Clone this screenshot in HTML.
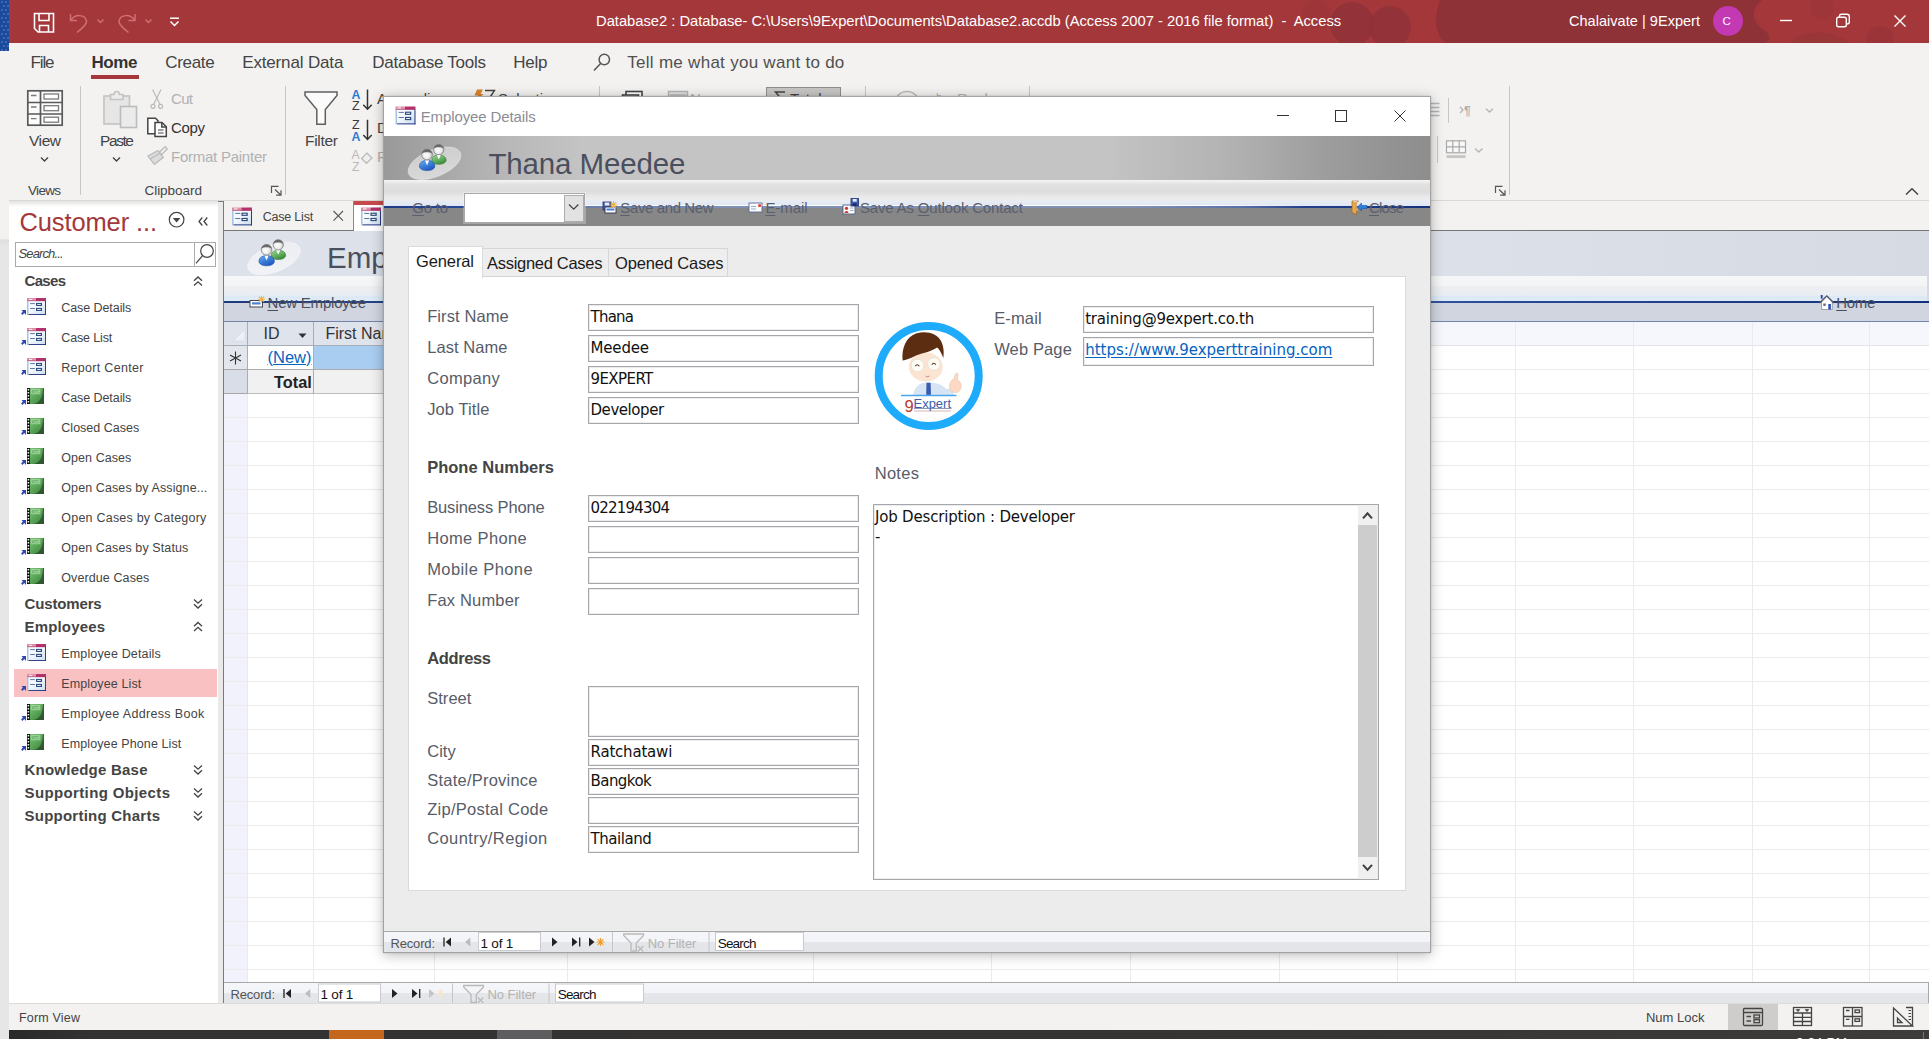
<!DOCTYPE html>
<html><head><meta charset="utf-8"><title>Database2 - Access</title>
<style>
*{box-sizing:border-box;margin:0;padding:0}
html,body{width:1929px;height:1039px;overflow:hidden;background:#f3f2f1;font-family:"Liberation Sans",sans-serif;color:#444}
.a{position:absolute}
.t{position:absolute;white-space:nowrap;line-height:1}
svg.L{position:absolute;left:0;top:0;width:1929px;height:1039px;overflow:hidden}
.fld{position:absolute;background:#fff;border:1px solid #a6a6ad;box-shadow:inset 0 0 0 1px #ececec}
u{text-decoration:underline;text-underline-offset:2px}
</style></head><body>
<div class="a" style="left:0;top:0;width:9px;height:1039px;background:#e6e6e6"></div>
<div class="a" style="left:0;top:43px;width:9px;height:204px;background:linear-gradient(#f3f2f1 0,#f3f2f1 96%,#dedede 96.5%,#e6e6e6 100%)"></div>
<div class="a" style="left:0;top:0;width:9px;height:51px;background:#1a4a9c"></div>
<div class="a" id="titlebar" style="left:9px;top:0;width:1920px;height:43px;background:#a4373a"></div>
<div class="a" id="ribbon" style="left:9px;top:43px;width:1920px;height:158px;background:#f3f2f1"></div>
<div class="a" style="left:9px;top:200px;width:1920px;height:4px;background:linear-gradient(#d2d0ce,#e9e8e7 40%,#f3f2f1)"></div>
<div class="a" id="nav" style="left:9px;top:203px;width:209px;height:800px;background:#fff"></div>
<div class="a" style="left:9px;top:201px;width:209px;height:6px;background:linear-gradient(#e4e3e2,#fff)"></div>
<div class="a" style="left:218px;top:201px;width:6px;height:802px;background:#e9e9e9;border-right:1px solid #7a7a7a;border-top:1px solid #7a7a7a"></div>
<div class="a" id="doc" style="left:224px;top:201px;width:1705px;height:782px;background:#fff"></div>
<div class="a" style="left:224px;top:201px;width:1705px;height:30px;background:#f3f2f1"></div>
<div class="a" style="left:224px;top:201px;width:130px;height:30px;background:#f3f2f1;border-right:1px solid #8a8a8a;border-bottom:1px solid #777"></div>
<div class="a" style="left:224px;top:230px;width:1705px;height:1px;background:#777"></div>
<div class="a" style="left:354px;top:201px;width:130px;height:31px;background:#fff;border-top:4px solid #c8494d"></div>
<div class="a" style="left:224px;top:231px;width:1705px;height:45px;background:linear-gradient(90deg,#dde1e9 0,#dfe3ea 60%,#d6dae3 100%)"></div>
<div class="a" style="left:1927px;top:276px;width:2px;height:25px;background:#d6dae3"></div>
<div class="a" style="left:224px;top:276px;width:1703px;height:25px;background:linear-gradient(#f6f7f8 0,#f3f4f5 38%,#eceef1 42%,#eaedf2 75%,#ddeaf6 82%,#dcebf7 100%)"></div>
<div class="a" style="left:224px;top:301px;width:1705px;height:2px;background:linear-gradient(90deg,#1f3a7c 0,#2b4a96 20%,#5b7fc4 50%,#2b4a96 75%,#14307a 100%)"></div>
<div class="a" style="left:224px;top:303px;width:1705px;height:18px;background:#d0d5df"></div>
<div class="a" style="left:224px;top:321px;width:1705px;height:1px;background:#7484ab"></div>
<div class="a" style="left:224px;top:322px;width:1705px;height:24px;background:#f6f7fd"></div>
<div class="a" style="left:224px;top:322px;width:161px;height:24px;background:#dfe3ec;border-bottom:1px solid #a9adb8"></div>
<div class="a" style="left:224px;top:346px;width:23px;height:637px;background:#f1f2fb"></div>
<div class="a" style="left:224px;top:346px;width:23px;height:24px;background:#e4e6ed;border-bottom:1px solid #a8a8a8"></div>
<div class="a" style="left:224px;top:370px;width:23px;height:24px;background:#d9dde7;border-bottom:1px solid #a8a8a8"></div>
<div class="a" style="left:248px;top:370px;width:1150px;height:24px;background:#f1f1f1"></div>
<div class="a" style="left:314px;top:346px;width:80px;height:23px;background:#a9cdf1"></div>
<div class="a" style="left:224px;top:982px;width:1705px;height:21px;border-top:1px solid #a9a9a9;border-right:1px solid #a9a9a9;background:linear-gradient(#f5f6f9 0,#f3f4f7 48%,#e4e6ea 52%,#e3e5e9 100%)"></div>
<div class="a" style="left:9px;top:1003px;width:1920px;height:27px;background:#f3f2f1;border-top:1px solid #dcdcdc"></div>
<div class="a" style="left:1728px;top:1004px;width:50px;height:26px;background:#cfcdcb"></div>
<div class="a" style="left:9px;top:1030px;width:1920px;height:9px;background:linear-gradient(90deg,#2a2929 0,#333232 4%,#353433 60%,#3e3c3b 100%)"></div>
<div class="a" style="left:1923px;top:1032px;width:1px;height:7px;background:#77726f"></div>
<div class="a" style="left:329px;top:1030px;width:55px;height:9px;background:#c2671d"></div>
<div class="a" style="left:497px;top:1030px;width:55px;height:9px;background:#5d5d5f"></div>
<svg class="L" viewBox="0 0 1929 1039">
<defs><radialGradient id="gHead" cx=".42" cy=".55" r=".6"><stop offset="0" stop-color="#fff"/><stop offset=".55" stop-color="#ececec"/><stop offset="1" stop-color="#b4b4b4"/></radialGradient><linearGradient id="gBlue" x1="0" y1="0" x2=".6" y2="1"><stop offset="0" stop-color="#6fb1f2"/><stop offset=".5" stop-color="#3f83dc"/><stop offset="1" stop-color="#1f58bf"/></linearGradient><linearGradient id="gGreen" x1="0" y1="0" x2=".6" y2="1"><stop offset="0" stop-color="#a6dba0"/><stop offset=".5" stop-color="#6bb566"/><stop offset="1" stop-color="#3c8a3a"/></linearGradient><linearGradient id="gForm" x1="0" y1="0" x2="1" y2="1"><stop offset="0" stop-color="#fff"/><stop offset=".45" stop-color="#f5f9fd"/><stop offset="1" stop-color="#c9dcef"/></linearGradient><linearGradient id="gRep" x1="0" y1="0" x2="1" y2="1"><stop offset="0" stop-color="#86c883"/><stop offset=".5" stop-color="#5ba858"/><stop offset="1" stop-color="#3c7f3b"/></linearGradient><linearGradient id="gPlate" x1="0" y1="1" x2="1" y2="0"><stop offset="0" stop-color="rgba(255,255,255,.62)"/><stop offset="1" stop-color="rgba(255,255,255,.4)"/></linearGradient></defs>
<g fill="#5f82c4" opacity=".55"><rect x="1" y="1" width="2" height="2"/><rect x="5" y="1" width="2" height="2"/><rect x="3" y="5" width="2" height="2"/><rect x="7" y="5" width="2" height="2"/><rect x="1" y="9" width="2" height="2"/><rect x="5" y="9" width="2" height="2"/><rect x="3" y="13" width="2" height="2"/><rect x="7" y="13" width="2" height="2"/><rect x="1" y="17" width="2" height="2"/><rect x="5" y="17" width="2" height="2"/><rect x="3" y="21" width="2" height="2"/><rect x="7" y="21" width="2" height="2"/><rect x="1" y="25" width="2" height="2"/><rect x="5" y="25" width="2" height="2"/><rect x="3" y="29" width="2" height="2"/><rect x="7" y="29" width="2" height="2"/><rect x="1" y="33" width="2" height="2"/><rect x="5" y="33" width="2" height="2"/><rect x="3" y="37" width="2" height="2"/><rect x="7" y="37" width="2" height="2"/><rect x="1" y="41" width="2" height="2"/><rect x="5" y="41" width="2" height="2"/><rect x="3" y="45" width="2" height="2"/><rect x="7" y="45" width="2" height="2"/><rect x="1" y="49" width="2" height="2"/><rect x="5" y="49" width="2" height="2"/></g>
<clipPath id="tbc"><rect x="9" y="0" width="1920" height="43"/></clipPath><g fill="#8d3238" clip-path="url(#tbc)"><path d="M1440 0 H1762 C1750 10 1752 22 1764 30 C1772 36 1770 41 1765 43 H1445 C1432 30 1436 12 1440 0Z" opacity=".92"/><circle cx="1352" cy="24" r="22" opacity=".75"/><circle cx="1390" cy="27" r="21" opacity=".75"/><circle cx="1316" cy="14" r="14" opacity=".25"/><path d="M1790 43 C1800 30 1830 28 1850 43Z" opacity=".45"/><circle cx="1880" cy="40" r="14" opacity=".35"/><circle cx="1822" cy="8" r="12" opacity=".25"/></g>
<g stroke="#fff" fill="none" stroke-width="1.6"><path d="M34.5 13.5 H53.5 V32 H38 L34.5 28.5 Z"/><path d="M39 14 V20.5 H49 V14"/><path d="M39.5 32 V25.5 H48.5 V32"/></g>
<g stroke="#cf6f74" fill="none" stroke-width="1.5"><path d="M70.5 14 V20.5 H77"/><path d="M71 20 C75 14 85 14 86.5 21 C87 25 82 28 77 32.5"/><path d="M97.5 19.5 L100.5 22.5 L103.5 19.5"/><path d="M135 14 V20.5 H128.5"/><path d="M134.5 20 C130.5 14 120.5 14 119 21 C118.5 25 123.5 28 128.5 32.5"/><path d="M145.5 19.5 L148.5 22.5 L151.5 19.5"/></g>
<g stroke="#fff" fill="none" stroke-width="1.5"><path d="M170 18.2 H179"/><path d="M170.5 21.5 L174.5 25.5 L178.5 21.5"/></g>
<circle cx="1728" cy="21" r="15" fill="#c239b3"/>
<g stroke="#fff" fill="none" stroke-width="1.4"><path d="M1780 20.5 H1792"/><rect x="1836.7" y="17.2" width="9.6" height="9.6" rx="1.8"/><path d="M1839.5 17 V16 Q1839.5 14.3 1841.3 14.3 H1847 Q1849.3 14.3 1849.3 16.5 V22.3 Q1849.3 24 1847 24"/><path d="M1894.5 15.5 L1905.5 26.5 M1905.5 15.5 L1894.5 26.5"/></g>
<rect x="91" y="75" width="48" height="4" fill="#a4373a"/>
<g stroke="#555" fill="none" stroke-width="1.5"><circle cx="604.3" cy="59.5" r="5.2"/><path d="M600.6 63.4 L594 70.5"/></g>
<path d="M80.5 86 V195" stroke="#c8c6c4" stroke-width="1"/>
<path d="M285.5 86 V195" stroke="#c8c6c4" stroke-width="1"/>
<path d="M599.5 86 V195" stroke="#c8c6c4" stroke-width="1"/>
<path d="M865.5 86 V195" stroke="#c8c6c4" stroke-width="1"/>
<path d="M1029.5 86 V195" stroke="#c8c6c4" stroke-width="1"/>
<path d="M1509.5 86 V195" stroke="#c8c6c4" stroke-width="1"/>
<path d="M1448.5 98 V123" stroke="#c8c6c4" stroke-width="1"/>
<path d="M1437.5 136 V163" stroke="#c8c6c4" stroke-width="1"/>
<g stroke="#5a5a5a" fill="#fbfbfb" stroke-width="1.7"><rect x="27.8" y="90.8" width="34.4" height="34.4"/><path d="M40.5 91 V125 M28 102.5 H62 M28 114 H62" fill="none"/></g>
<g stroke="#7a7a7a" fill="#fff" stroke-width="1.3"><path d="M31 95.5 H36.5 M31 107 H36.5 M31 118.7 H36.5"/><rect x="44" y="94" width="14.5" height="5"/><rect x="44" y="105.7" width="14.5" height="5"/><rect x="44" y="117.2" width="14.5" height="5"/></g>
<g stroke="#444" fill="none" stroke-width="1.4"><path d="M41 157.5 L44.5 161 L48 157.5"/><path d="M113 157.5 L116.5 161 L120 157.5"/></g>
<g stroke="#c3c3c3" stroke-width="1.6"><rect x="104" y="96" width="25.5" height="28" fill="#e6e6e6"/><path d="M110.5 99.5 V94.5 H114 C114 90.5 119.5 90.5 119.5 94.5 H123 V99.5 Z" fill="#ececec"/><rect x="120.5" y="106.5" width="16" height="21" fill="#ebebeb" stroke="#bcbcbc"/></g>
<g stroke="#b9b9b9" fill="none" stroke-width="1.2"><path d="M152.6 89.5 L160 104.5 M161 89.5 L153.6 104.5"/><circle cx="153" cy="106.3" r="2"/><circle cx="160.6" cy="106.3" r="2"/></g>
<g stroke="#444" fill="#fdfdfd" stroke-width="1.5"><path d="M147.8 118.3 H155.5 L158 120.8 V133.7 H147.8 Z"/><path d="M155 122.5 H162 L166.3 126.8 V136.5 H155 Z"/><path d="M161.8 122.7 V127 H166" fill="none"/><path d="M158 130 H163.5 M158 133 H163.5" stroke-width="1.1"/></g>
<g stroke="#b9b9b9" fill="#dcdcdc" stroke-width="1.2"><path d="M147.8 156 L158 150.5 L163.3 157.3 L154.5 164.4 Z"/><path d="M150.5 158.7 L160 153.2" fill="none"/><path d="M159.5 152 L165.2 146.6 L167.3 149 L161.6 154.7 Z" fill="#eee"/></g>
<g stroke="#555" fill="none" stroke-width="1.2"><path d="M271.5 193 V186.3 H278.5"/><path d="M275.0 189.5 L280.8 195 M281.0 190.3 V195.2 H276.1"/></g>
<g stroke="#555" fill="none" stroke-width="1.2"><path d="M1495.5 193 V186.3 H1502.5"/><path d="M1499.0 189.5 L1504.8 195 M1505.0 190.3 V195.2 H1500.1"/></g>
<path d="M305 92 H337 V95.5 L325.3 109.5 V124.3 H316.8 V109.5 L305 95.5 Z" stroke="#606060" fill="#fbfbfb" stroke-width="1.5"/>
<g stroke="#333" fill="none" stroke-width="1.5"><path d="M367.5 89.5 V109 M363.3 104.8 L367.5 109.2 L371.7 104.8"/><path d="M367.5 119.8 V139.3 M363.3 135.1 L367.5 139.5 L371.7 135.1"/></g>
<path d="M366.8 153 L372 158 L366.5 163.3 L361.5 158.5 Z" stroke="#b9b9b9" fill="#eee" stroke-width="1.2"/>
<path d="M477 89.5 H483 L480.5 94 H483.5 L476 101.5 L478 95.5 H474.5 Z" fill="#d9822b"/>
<path d="M485 90.5 H494.5 L490.5 96.5 V102 H488.5 V96.5" stroke="#444" fill="none" stroke-width="1.4"/>
<g stroke="#444" fill="#fdfdfd" stroke-width="1.6"><rect x="626" y="91.5" width="16" height="13"/><rect x="622.5" y="95" width="16" height="13"/></g>
<g stroke="#b5b5b5" fill="#dedede" stroke-width="1.4"><rect x="668.5" y="91.5" width="19" height="13"/><path d="M670 95 H686"/></g>
<rect x="766.5" y="87.5" width="74" height="24" fill="#c8c6c4" stroke="#8f8d8b"/>
<path d="M785 92 H775.5 L781 98.5 L775.5 105 H785" stroke="#444" fill="none" stroke-width="1.5"/>
<g stroke="#b9b9b9" fill="none" stroke-width="1.5"><circle cx="907" cy="104" r="12.5"/><path d="M932 96 L929 98.5 L932 101"/></g>
<g stroke="#b4b4b4" fill="none" stroke-width="1.3"><path d="M1428 103.5 H1439.5 M1428 107.5 H1439.5 M1428 111.5 H1439.5 M1428 115.5 H1439.5"/><path d="M1486 108.7 L1489.5 112 L1493 108.7"/><path d="M1475 148.5 L1478.7 152 L1482.5 148.5"/><path d="M1460 107 L1463 110 L1460 113"/></g>
<g stroke="#a9a9a9" fill="#f7f7f7" stroke-width="1.2"><rect x="1446.5" y="140.8" width="19" height="12"/><path d="M1446.5 146.8 H1465.5 M1452.8 140.8 V152.8 M1459.2 140.8 V152.8" fill="none"/><rect x="1446.5" y="155.2" width="19" height="2.8" fill="#c5c5c5" stroke="none"/></g>
<path d="M1906 194.5 L1912 188.8 L1918 194.5" stroke="#444" fill="none" stroke-width="1.5"/>
<g stroke="#444" fill="none" stroke-width="1.2"><circle cx="176.6" cy="219.7" r="7.3"/></g><path d="M172.8 218 H180.4 L176.6 222.5 Z" fill="#444"/>
<g stroke="#444" fill="none" stroke-width="1.3"><path d="M202.3 217.5 L199 221.5 L202.3 225.5 M207.3 217.5 L204 221.5 L207.3 225.5"/></g>
<rect x="15.5" y="242.5" width="200" height="24" fill="#fff" stroke="#ababab"/><path d="M194.5 243 V266" stroke="#ababab"/>
<g stroke="#444" fill="none" stroke-width="1.2"><circle cx="207" cy="251" r="6.3"/><path d="M202.6 255.6 L196 263.3"/></g>
<path d="M194 280.7 L198 277.0 L202 280.7 M194 285.5 L198 281.8 L202 285.5" stroke="#444" fill="none" stroke-width="1.3"/>
<path d="M194 599.5 L198 603.2 L202 599.5 M194 604.3 L198 608 L202 604.3" stroke="#444" fill="none" stroke-width="1.3"/>
<path d="M194 626.2 L198 622.5 L202 626.2 M194 631 L198 627.3 L202 631" stroke="#444" fill="none" stroke-width="1.3"/>
<path d="M194 765.5 L198 769.2 L202 765.5 M194 770.3 L198 774 L202 770.3" stroke="#444" fill="none" stroke-width="1.3"/>
<path d="M194 788.5 L198 792.2 L202 788.5 M194 793.3 L198 797 L202 793.3" stroke="#444" fill="none" stroke-width="1.3"/>
<path d="M194 811.5 L198 815.2 L202 811.5 M194 816.3 L198 820 L202 816.3" stroke="#444" fill="none" stroke-width="1.3"/>
<rect x="14" y="669" width="203" height="28" fill="#f9c1c1"/>
<g transform="translate(27 298) scale(1.0)"><rect x="0" y="0" width="19" height="17" fill="url(#gForm)"/><rect x="0" y="0" width="9" height="3" fill="#dc8fa6"/><rect x="9" y="0" width="10" height="3" fill="#b3326c"/><path d="M0 2.8 H19" stroke="#a82c62" stroke-width=".5"/><rect x="2" y=".9" width="3.2" height=".9" fill="#fff"/><rect x="0" y="3" width="1.5" height="14" fill="#a9c3e6"/><rect x="18.1" y="3" width=".9" height="14" fill="#1e2f7c"/><rect x="1.5" y="16.1" width="17.5" height=".9" fill="#1e2f7c"/><path d="M3.1 5.6 H7.9 M3.1 10.5 H7.9" stroke="#4a6a9a" stroke-width=".9"/><rect x="9" y="4.9" width="6" height="3.1" fill="#2f4d80"/><rect x="9" y="9.9" width="6" height="3.1" fill="#2f4d80"/><path d="M10.2 6.45 H13.8 M10.2 11.45 H13.8" stroke="#fff" stroke-width=".9"/></g>
<path d="M26.0 315 V310 H21.5 L22.9 311.6 L21.1 313.6 L22.4 314.9 L24.3 313 Z" fill="#2f47b0"/>
<g transform="translate(27 328) scale(1.0)"><rect x="0" y="0" width="19" height="17" fill="url(#gForm)"/><rect x="0" y="0" width="9" height="3" fill="#dc8fa6"/><rect x="9" y="0" width="10" height="3" fill="#b3326c"/><path d="M0 2.8 H19" stroke="#a82c62" stroke-width=".5"/><rect x="2" y=".9" width="3.2" height=".9" fill="#fff"/><rect x="0" y="3" width="1.5" height="14" fill="#a9c3e6"/><rect x="18.1" y="3" width=".9" height="14" fill="#1e2f7c"/><rect x="1.5" y="16.1" width="17.5" height=".9" fill="#1e2f7c"/><path d="M3.1 5.6 H7.9 M3.1 10.5 H7.9" stroke="#4a6a9a" stroke-width=".9"/><rect x="9" y="4.9" width="6" height="3.1" fill="#2f4d80"/><rect x="9" y="9.9" width="6" height="3.1" fill="#2f4d80"/><path d="M10.2 6.45 H13.8 M10.2 11.45 H13.8" stroke="#fff" stroke-width=".9"/></g>
<path d="M26.0 345 V340 H21.5 L22.9 341.6 L21.1 343.6 L22.4 344.9 L24.3 343 Z" fill="#2f47b0"/>
<g transform="translate(27 358) scale(1.0)"><rect x="0" y="0" width="19" height="17" fill="url(#gForm)"/><rect x="0" y="0" width="9" height="3" fill="#dc8fa6"/><rect x="9" y="0" width="10" height="3" fill="#b3326c"/><path d="M0 2.8 H19" stroke="#a82c62" stroke-width=".5"/><rect x="2" y=".9" width="3.2" height=".9" fill="#fff"/><rect x="0" y="3" width="1.5" height="14" fill="#a9c3e6"/><rect x="18.1" y="3" width=".9" height="14" fill="#1e2f7c"/><rect x="1.5" y="16.1" width="17.5" height=".9" fill="#1e2f7c"/><path d="M3.1 5.6 H7.9 M3.1 10.5 H7.9" stroke="#4a6a9a" stroke-width=".9"/><rect x="9" y="4.9" width="6" height="3.1" fill="#2f4d80"/><rect x="9" y="9.9" width="6" height="3.1" fill="#2f4d80"/><path d="M10.2 6.45 H13.8 M10.2 11.45 H13.8" stroke="#fff" stroke-width=".9"/></g>
<path d="M26.0 375 V370 H21.5 L22.9 371.6 L21.1 373.6 L22.4 374.9 L24.3 373 Z" fill="#2f47b0"/>
<g transform="translate(27 644) scale(1.0)"><rect x="0" y="0" width="19" height="17" fill="url(#gForm)"/><rect x="0" y="0" width="9" height="3" fill="#dc8fa6"/><rect x="9" y="0" width="10" height="3" fill="#b3326c"/><path d="M0 2.8 H19" stroke="#a82c62" stroke-width=".5"/><rect x="2" y=".9" width="3.2" height=".9" fill="#fff"/><rect x="0" y="3" width="1.5" height="14" fill="#a9c3e6"/><rect x="18.1" y="3" width=".9" height="14" fill="#1e2f7c"/><rect x="1.5" y="16.1" width="17.5" height=".9" fill="#1e2f7c"/><path d="M3.1 5.6 H7.9 M3.1 10.5 H7.9" stroke="#4a6a9a" stroke-width=".9"/><rect x="9" y="4.9" width="6" height="3.1" fill="#2f4d80"/><rect x="9" y="9.9" width="6" height="3.1" fill="#2f4d80"/><path d="M10.2 6.45 H13.8 M10.2 11.45 H13.8" stroke="#fff" stroke-width=".9"/></g>
<path d="M26.0 661 V656 H21.5 L22.9 657.6 L21.1 659.6 L22.4 660.9 L24.3 659 Z" fill="#2f47b0"/>
<g transform="translate(27 674) scale(1.0)"><rect x="0" y="0" width="19" height="17" fill="url(#gForm)"/><rect x="0" y="0" width="9" height="3" fill="#dc8fa6"/><rect x="9" y="0" width="10" height="3" fill="#b3326c"/><path d="M0 2.8 H19" stroke="#a82c62" stroke-width=".5"/><rect x="2" y=".9" width="3.2" height=".9" fill="#fff"/><rect x="0" y="3" width="1.5" height="14" fill="#a9c3e6"/><rect x="18.1" y="3" width=".9" height="14" fill="#1e2f7c"/><rect x="1.5" y="16.1" width="17.5" height=".9" fill="#1e2f7c"/><path d="M3.1 5.6 H7.9 M3.1 10.5 H7.9" stroke="#4a6a9a" stroke-width=".9"/><rect x="9" y="4.9" width="6" height="3.1" fill="#2f4d80"/><rect x="9" y="9.9" width="6" height="3.1" fill="#2f4d80"/><path d="M10.2 6.45 H13.8 M10.2 11.45 H13.8" stroke="#fff" stroke-width=".9"/></g>
<path d="M26.0 691 V686 H21.5 L22.9 687.6 L21.1 689.6 L22.4 690.9 L24.3 689 Z" fill="#2f47b0"/>
<g transform="translate(27 388)"><rect x="0" y="0" width="17" height="16" fill="url(#gRep)"/><path d="M17 0 V16 H6 C12 15 15.5 11 16 0Z" fill="#1f2f1f" opacity=".55"/><rect x="0" y="0" width="3" height="16" fill="#111"/><rect x=".6" y="1" width="1.6" height="1.5" fill="#f2f2f2"/><rect x=".6" y="4" width="1.6" height="1.5" fill="#f2f2f2"/><rect x=".6" y="7" width="1.6" height="1.5" fill="#f2f2f2"/><rect x=".6" y="10" width="1.6" height="1.5" fill="#f2f2f2"/><rect x=".6" y="13" width="1.6" height="1.5" fill="#f2f2f2"/><rect x="4.3" y="1.2" width="9" height="5" fill="#a6d6a3"/><rect x="5.3" y="2.3" width="7.2" height="3" fill="#5fae5c"/><path d="M6.5 4 H12 V2.8" stroke="#cfeacd" stroke-width=".8" fill="none"/></g>
<path d="M26.0 405 V400 H21.5 L22.9 401.6 L21.1 403.6 L22.4 404.9 L24.3 403 Z" fill="#2f47b0"/>
<g transform="translate(27 418)"><rect x="0" y="0" width="17" height="16" fill="url(#gRep)"/><path d="M17 0 V16 H6 C12 15 15.5 11 16 0Z" fill="#1f2f1f" opacity=".55"/><rect x="0" y="0" width="3" height="16" fill="#111"/><rect x=".6" y="1" width="1.6" height="1.5" fill="#f2f2f2"/><rect x=".6" y="4" width="1.6" height="1.5" fill="#f2f2f2"/><rect x=".6" y="7" width="1.6" height="1.5" fill="#f2f2f2"/><rect x=".6" y="10" width="1.6" height="1.5" fill="#f2f2f2"/><rect x=".6" y="13" width="1.6" height="1.5" fill="#f2f2f2"/><rect x="4.3" y="1.2" width="9" height="5" fill="#a6d6a3"/><rect x="5.3" y="2.3" width="7.2" height="3" fill="#5fae5c"/><path d="M6.5 4 H12 V2.8" stroke="#cfeacd" stroke-width=".8" fill="none"/></g>
<path d="M26.0 435 V430 H21.5 L22.9 431.6 L21.1 433.6 L22.4 434.9 L24.3 433 Z" fill="#2f47b0"/>
<g transform="translate(27 448)"><rect x="0" y="0" width="17" height="16" fill="url(#gRep)"/><path d="M17 0 V16 H6 C12 15 15.5 11 16 0Z" fill="#1f2f1f" opacity=".55"/><rect x="0" y="0" width="3" height="16" fill="#111"/><rect x=".6" y="1" width="1.6" height="1.5" fill="#f2f2f2"/><rect x=".6" y="4" width="1.6" height="1.5" fill="#f2f2f2"/><rect x=".6" y="7" width="1.6" height="1.5" fill="#f2f2f2"/><rect x=".6" y="10" width="1.6" height="1.5" fill="#f2f2f2"/><rect x=".6" y="13" width="1.6" height="1.5" fill="#f2f2f2"/><rect x="4.3" y="1.2" width="9" height="5" fill="#a6d6a3"/><rect x="5.3" y="2.3" width="7.2" height="3" fill="#5fae5c"/><path d="M6.5 4 H12 V2.8" stroke="#cfeacd" stroke-width=".8" fill="none"/></g>
<path d="M26.0 465 V460 H21.5 L22.9 461.6 L21.1 463.6 L22.4 464.9 L24.3 463 Z" fill="#2f47b0"/>
<g transform="translate(27 478)"><rect x="0" y="0" width="17" height="16" fill="url(#gRep)"/><path d="M17 0 V16 H6 C12 15 15.5 11 16 0Z" fill="#1f2f1f" opacity=".55"/><rect x="0" y="0" width="3" height="16" fill="#111"/><rect x=".6" y="1" width="1.6" height="1.5" fill="#f2f2f2"/><rect x=".6" y="4" width="1.6" height="1.5" fill="#f2f2f2"/><rect x=".6" y="7" width="1.6" height="1.5" fill="#f2f2f2"/><rect x=".6" y="10" width="1.6" height="1.5" fill="#f2f2f2"/><rect x=".6" y="13" width="1.6" height="1.5" fill="#f2f2f2"/><rect x="4.3" y="1.2" width="9" height="5" fill="#a6d6a3"/><rect x="5.3" y="2.3" width="7.2" height="3" fill="#5fae5c"/><path d="M6.5 4 H12 V2.8" stroke="#cfeacd" stroke-width=".8" fill="none"/></g>
<path d="M26.0 495 V490 H21.5 L22.9 491.6 L21.1 493.6 L22.4 494.9 L24.3 493 Z" fill="#2f47b0"/>
<g transform="translate(27 508)"><rect x="0" y="0" width="17" height="16" fill="url(#gRep)"/><path d="M17 0 V16 H6 C12 15 15.5 11 16 0Z" fill="#1f2f1f" opacity=".55"/><rect x="0" y="0" width="3" height="16" fill="#111"/><rect x=".6" y="1" width="1.6" height="1.5" fill="#f2f2f2"/><rect x=".6" y="4" width="1.6" height="1.5" fill="#f2f2f2"/><rect x=".6" y="7" width="1.6" height="1.5" fill="#f2f2f2"/><rect x=".6" y="10" width="1.6" height="1.5" fill="#f2f2f2"/><rect x=".6" y="13" width="1.6" height="1.5" fill="#f2f2f2"/><rect x="4.3" y="1.2" width="9" height="5" fill="#a6d6a3"/><rect x="5.3" y="2.3" width="7.2" height="3" fill="#5fae5c"/><path d="M6.5 4 H12 V2.8" stroke="#cfeacd" stroke-width=".8" fill="none"/></g>
<path d="M26.0 525 V520 H21.5 L22.9 521.6 L21.1 523.6 L22.4 524.9 L24.3 523 Z" fill="#2f47b0"/>
<g transform="translate(27 538)"><rect x="0" y="0" width="17" height="16" fill="url(#gRep)"/><path d="M17 0 V16 H6 C12 15 15.5 11 16 0Z" fill="#1f2f1f" opacity=".55"/><rect x="0" y="0" width="3" height="16" fill="#111"/><rect x=".6" y="1" width="1.6" height="1.5" fill="#f2f2f2"/><rect x=".6" y="4" width="1.6" height="1.5" fill="#f2f2f2"/><rect x=".6" y="7" width="1.6" height="1.5" fill="#f2f2f2"/><rect x=".6" y="10" width="1.6" height="1.5" fill="#f2f2f2"/><rect x=".6" y="13" width="1.6" height="1.5" fill="#f2f2f2"/><rect x="4.3" y="1.2" width="9" height="5" fill="#a6d6a3"/><rect x="5.3" y="2.3" width="7.2" height="3" fill="#5fae5c"/><path d="M6.5 4 H12 V2.8" stroke="#cfeacd" stroke-width=".8" fill="none"/></g>
<path d="M26.0 555 V550 H21.5 L22.9 551.6 L21.1 553.6 L22.4 554.9 L24.3 553 Z" fill="#2f47b0"/>
<g transform="translate(27 568)"><rect x="0" y="0" width="17" height="16" fill="url(#gRep)"/><path d="M17 0 V16 H6 C12 15 15.5 11 16 0Z" fill="#1f2f1f" opacity=".55"/><rect x="0" y="0" width="3" height="16" fill="#111"/><rect x=".6" y="1" width="1.6" height="1.5" fill="#f2f2f2"/><rect x=".6" y="4" width="1.6" height="1.5" fill="#f2f2f2"/><rect x=".6" y="7" width="1.6" height="1.5" fill="#f2f2f2"/><rect x=".6" y="10" width="1.6" height="1.5" fill="#f2f2f2"/><rect x=".6" y="13" width="1.6" height="1.5" fill="#f2f2f2"/><rect x="4.3" y="1.2" width="9" height="5" fill="#a6d6a3"/><rect x="5.3" y="2.3" width="7.2" height="3" fill="#5fae5c"/><path d="M6.5 4 H12 V2.8" stroke="#cfeacd" stroke-width=".8" fill="none"/></g>
<path d="M26.0 585 V580 H21.5 L22.9 581.6 L21.1 583.6 L22.4 584.9 L24.3 583 Z" fill="#2f47b0"/>
<g transform="translate(27 704)"><rect x="0" y="0" width="17" height="16" fill="url(#gRep)"/><path d="M17 0 V16 H6 C12 15 15.5 11 16 0Z" fill="#1f2f1f" opacity=".55"/><rect x="0" y="0" width="3" height="16" fill="#111"/><rect x=".6" y="1" width="1.6" height="1.5" fill="#f2f2f2"/><rect x=".6" y="4" width="1.6" height="1.5" fill="#f2f2f2"/><rect x=".6" y="7" width="1.6" height="1.5" fill="#f2f2f2"/><rect x=".6" y="10" width="1.6" height="1.5" fill="#f2f2f2"/><rect x=".6" y="13" width="1.6" height="1.5" fill="#f2f2f2"/><rect x="4.3" y="1.2" width="9" height="5" fill="#a6d6a3"/><rect x="5.3" y="2.3" width="7.2" height="3" fill="#5fae5c"/><path d="M6.5 4 H12 V2.8" stroke="#cfeacd" stroke-width=".8" fill="none"/></g>
<path d="M26.0 721 V716 H21.5 L22.9 717.6 L21.1 719.6 L22.4 720.9 L24.3 719 Z" fill="#2f47b0"/>
<g transform="translate(27 734)"><rect x="0" y="0" width="17" height="16" fill="url(#gRep)"/><path d="M17 0 V16 H6 C12 15 15.5 11 16 0Z" fill="#1f2f1f" opacity=".55"/><rect x="0" y="0" width="3" height="16" fill="#111"/><rect x=".6" y="1" width="1.6" height="1.5" fill="#f2f2f2"/><rect x=".6" y="4" width="1.6" height="1.5" fill="#f2f2f2"/><rect x=".6" y="7" width="1.6" height="1.5" fill="#f2f2f2"/><rect x=".6" y="10" width="1.6" height="1.5" fill="#f2f2f2"/><rect x=".6" y="13" width="1.6" height="1.5" fill="#f2f2f2"/><rect x="4.3" y="1.2" width="9" height="5" fill="#a6d6a3"/><rect x="5.3" y="2.3" width="7.2" height="3" fill="#5fae5c"/><path d="M6.5 4 H12 V2.8" stroke="#cfeacd" stroke-width=".8" fill="none"/></g>
<path d="M26.0 751 V746 H21.5 L22.9 747.6 L21.1 749.6 L22.4 750.9 L24.3 749 Z" fill="#2f47b0"/>
<g transform="translate(232 207.5) scale(1.05)"><rect x="0" y="0" width="19" height="17" fill="url(#gForm)"/><rect x="0" y="0" width="9" height="3" fill="#dc8fa6"/><rect x="9" y="0" width="10" height="3" fill="#b3326c"/><path d="M0 2.8 H19" stroke="#a82c62" stroke-width=".5"/><rect x="2" y=".9" width="3.2" height=".9" fill="#fff"/><rect x="0" y="3" width="1.5" height="14" fill="#a9c3e6"/><rect x="18.1" y="3" width=".9" height="14" fill="#1e2f7c"/><rect x="1.5" y="16.1" width="17.5" height=".9" fill="#1e2f7c"/><path d="M3.1 5.6 H7.9 M3.1 10.5 H7.9" stroke="#4a6a9a" stroke-width=".9"/><rect x="9" y="4.9" width="6" height="3.1" fill="#2f4d80"/><rect x="9" y="9.9" width="6" height="3.1" fill="#2f4d80"/><path d="M10.2 6.45 H13.8 M10.2 11.45 H13.8" stroke="#fff" stroke-width=".9"/></g>
<g transform="translate(361 207.5) scale(1.05)"><rect x="0" y="0" width="19" height="17" fill="url(#gForm)"/><rect x="0" y="0" width="9" height="3" fill="#dc8fa6"/><rect x="9" y="0" width="10" height="3" fill="#b3326c"/><path d="M0 2.8 H19" stroke="#a82c62" stroke-width=".5"/><rect x="2" y=".9" width="3.2" height=".9" fill="#fff"/><rect x="0" y="3" width="1.5" height="14" fill="#a9c3e6"/><rect x="18.1" y="3" width=".9" height="14" fill="#1e2f7c"/><rect x="1.5" y="16.1" width="17.5" height=".9" fill="#1e2f7c"/><path d="M3.1 5.6 H7.9 M3.1 10.5 H7.9" stroke="#4a6a9a" stroke-width=".9"/><rect x="9" y="4.9" width="6" height="3.1" fill="#2f4d80"/><rect x="9" y="9.9" width="6" height="3.1" fill="#2f4d80"/><path d="M10.2 6.45 H13.8 M10.2 11.45 H13.8" stroke="#fff" stroke-width=".9"/></g>
<path d="M333.5 211 L343 220.7 M343 211 L333.5 220.7" stroke="#555" stroke-width="1.1"/>
<g transform="translate(247 238.5)"><ellipse cx="27" cy="20" rx="28" ry="13.5" transform="rotate(-22 27 20)" fill="url(#gPlate)" stroke="rgba(255,255,255,.35)" stroke-width=".8"/><g transform="translate(2.2 -2.2) scale(.9)"><path d="M24.5 21 C24.5 13.5 40.5 13.5 40.5 21 C40.5 24.3 36 25.8 32.5 25.8 C28 25.8 24.5 24.3 24.5 21Z" fill="url(#gGreen)" stroke="#3d7e3a" stroke-width=".7"/><path d="M30 15.3 L32.3 20.5 L34.6 15.3Z" fill="#fff"/><circle cx="32.3" cy="9.5" r="5.7" fill="url(#gHead)" stroke="#777" stroke-width=".8"/><path d="M26.7 8.3 C27.5 2.3 37 2.3 37.9 8.3 C35 6.4 29.5 6.4 26.7 8.3Z" fill="#6a6a6a"/><path d="M10.8 27.5 C10.8 19.3 28 19.3 28 27.5 C28 31.2 23.5 32.8 19.4 32.8 C15 32.8 10.8 31.2 10.8 27.5Z" fill="url(#gBlue)" stroke="#2a57a8" stroke-width=".7"/><path d="M17 21.3 L19.3 27 L21.6 21.3Z" fill="#fff"/><circle cx="19.3" cy="15" r="5.9" fill="url(#gHead)" stroke="#777" stroke-width=".8"/><path d="M13.5 13.8 C14.3 7.4 24.3 7.4 25.1 13.8 C22.3 11.8 16.3 11.8 13.5 13.8Z" fill="#6a6a6a"/></g></g>
<g><rect x="250" y="300.5" width="12.5" height="6.5" fill="#fff" stroke="#445" stroke-width="1"/><rect x="252" y="302.3" width="8.5" height="2.2" fill="#4a7fd6"/><path d="M261.5 295.7 V302.7 M258 299.2 H265 M259 296.7 L264 301.7 M264 296.7 L259 301.7" stroke="#f0b44a" stroke-width="1.1"/></g>
<g><path d="M1821.5 302 V309.5 H1832.3 V302 L1826.8 296.5Z" fill="#fdfdfd" stroke="#8a8fa0" stroke-width=".8"/><path d="M1819.5 303 L1826.8 295.8 L1834 303" stroke="#556" fill="none" stroke-width="1.3"/><rect x="1828.3" y="304" width="2.6" height="5.5" fill="#2a4fb0"/><rect x="1823.3" y="303.5" width="2.4" height="2.4" fill="#667"/><rect x="1820.8" y="295" width="1.8" height="3.6" fill="#2a3f90"/></g>
<g stroke="#ebebeb" stroke-width="1" fill="none"><path d="M247.5 394 V982"/><path d="M313.5 394 V982"/><path d="M434.5 394 V982"/><path d="M567.5 394 V982"/><path d="M813.5 394 V982"/><path d="M991.5 394 V982"/><path d="M1130.5 394 V982"/><path d="M1279.5 394 V982"/><path d="M1397.5 394 V982"/><path d="M1515.5 346 V982"/><path d="M1633.5 346 V982"/><path d="M1752.5 346 V982"/><path d="M1869.5 346 V982"/><path d="M224 417.5 H1929"/><path d="M224 441.5 H1929"/><path d="M224 465.5 H1929"/><path d="M224 489.5 H1929"/><path d="M224 513.5 H1929"/><path d="M224 537.5 H1929"/><path d="M224 561.5 H1929"/><path d="M224 585.5 H1929"/><path d="M224 609.5 H1929"/><path d="M224 633.5 H1929"/><path d="M224 657.5 H1929"/><path d="M224 681.5 H1929"/><path d="M224 705.5 H1929"/><path d="M224 729.5 H1929"/><path d="M224 753.5 H1929"/><path d="M224 777.5 H1929"/><path d="M224 801.5 H1929"/><path d="M224 825.5 H1929"/><path d="M224 849.5 H1929"/><path d="M224 873.5 H1929"/><path d="M224 897.5 H1929"/><path d="M224 921.5 H1929"/><path d="M224 945.5 H1929"/><path d="M224 969.5 H1929"/></g>
<g stroke="#e9eaf2" stroke-width="1" fill="none"><path d="M434.5 322 V345"/><path d="M567.5 322 V345"/><path d="M813.5 322 V345"/><path d="M991.5 322 V345"/><path d="M1130.5 322 V345"/><path d="M1279.5 322 V345"/><path d="M1397.5 322 V345"/><path d="M1515.5 322 V345"/><path d="M1633.5 322 V345"/><path d="M1752.5 322 V345"/><path d="M1869.5 322 V345"/></g>
<path d="M385 345.5 H1929" stroke="#e4e4e8"/><path d="M248 369.5 H1398" stroke="#ababab"/><path d="M248 393.5 H1398" stroke="#bdbdbd"/><path d="M1398 369.5 H1929 M1398 393.5 H1929" stroke="#ebebeb"/>
<g stroke="#cfcfcf" stroke-width="1" fill="none"><path d="M247.5 370 V393"/><path d="M313.5 370 V393"/><path d="M434.5 370 V393"/><path d="M567.5 370 V393"/><path d="M813.5 370 V393"/><path d="M991.5 370 V393"/><path d="M1130.5 370 V393"/><path d="M1279.5 370 V393"/><path d="M1397.5 370 V393"/></g>
<path d="M247.5 322 V394 M313.5 322 V394" stroke="#a9acb5"/>
<path d="M233 341 H245 V329Z" fill="#eef0f5" stroke="#d3d6de" stroke-width=".6"/>
<path d="M298.5 333.5 H306.5 L302.5 338Z" fill="#333"/>
<path d="M235.5 351.5 V364.5 M230 355 L241 361 M241 355 L230 361" stroke="#333" stroke-width="1.1"/>
<g><path d="M284 989.0 V998.0" stroke="#222" stroke-width="1.3"/><path d="M291 989.0 V998.0 L285.7 993.5Z" fill="#222"/><path d="M310.3 989.0 V998.0 L305 993.5Z" fill="#bdbdbd"/><rect x="318.5" y="984.0" width="62" height="18" fill="#fff" stroke="#c9cbd1"/><path d="M392 989.0 V998.0 L397.5 993.5Z" fill="#222"/><path d="M412 989.0 V998.0 L417.5 993.5Z" fill="#222"/><path d="M419.7 989.0 V998.0" stroke="#222" stroke-width="1.3"/><path d="M429 989.0 V998.0 L434.5 993.5Z" fill="#c4c4c4"/><path d="M440.5 989.5 V997.5 M436.5 993.5 H444.5 M437.7 990.7 L443.3 996.3 M443.3 990.7 L437.7 996.3" stroke="#f6e6cf" stroke-width="1.2"/><path d="M452.5 983.5 V1003.5 M549 983.5 V1003.5" stroke="#c4c6cc"/><path d="M463.7 985.5 H483.5 V987.0 L476.3 994.5 V1002.5 H471 V994.5 L463.7 987.0Z" fill="none" stroke="#b9b9b9" stroke-width="1.3"/><path d="M477.8 997.5 L483.3 1003.0 M483.3 997.5 L477.8 1003.0" stroke="#b9b9b9" stroke-width="1.1"/><rect x="555.5" y="984.0" width="88" height="18" fill="#fff" stroke="#c9cbd1"/></g>
<g stroke="#444" fill="none" stroke-width="1.3"><rect x="1743.5" y="1008.5" width="19" height="17" rx="1"/><path d="M1743.5 1012.5 H1762.5 M1746.5 1016.5 H1751 M1746.5 1021 H1751"/><rect x="1754" y="1015" width="5.5" height="3"/><rect x="1754" y="1019.7" width="5.5" height="3"/></g>
<g stroke="#444" fill="none" stroke-width="1.3"><rect x="1793.5" y="1007.5" width="18" height="18"/><path d="M1793.5 1013 H1811.5 M1793.5 1017.3 H1811.5 M1793.5 1021.5 H1811.5 M1802.5 1013 V1025.5"/><path d="M1796.3 1009.6 L1798 1011.6 L1799.7 1009.6Z M1805.3 1009.6 L1807 1011.6 L1808.7 1009.6Z" fill="#444" stroke-width=".8"/></g>
<g stroke="#444" fill="none" stroke-width="1.3"><rect x="1843.5" y="1007.5" width="18.5" height="18.5"/><path d="M1852.5 1007.5 V1026 M1843.5 1016.5 H1862 M1846 1010.5 H1849.5 M1846 1019.3 H1849.5"/><rect x="1855" y="1010" width="4.5" height="2.6"/><rect x="1855" y="1018.8" width="4.5" height="2.6"/></g>
<g stroke="#444" fill="none" stroke-width="1.3"><path d="M1893.5 1008 V1026 H1912.5 Z"/><path d="M1906 1007.5 H1912.5 V1026"/><path d="M1897.5 1018 L1897.5 1022.5 H1902 Z"/><path d="M1908.5 1010.5 H1911 M1908.5 1013.5 H1911 M1908.5 1016.5 H1911 M1908.5 1019.5 H1911" stroke-width="1"/></g>
</svg>
<div id="basetext">
<span class="t" style="font-size:14.75px;color:#fff;letter-spacing:-0.016px;left:596.00px;top:13.62px;white-space:pre;">Database2 : Database- C:\Users\9Expert\Documents\Database2.accdb (Access 2007 - 2016 file format)  -  Access</span>
<span class="t" style="font-size:14.5px;color:#fff;letter-spacing:0.037px;left:1569.00px;top:13.75px;">Chalaivate | 9Expert</span>
<span class="t" style="font-size:11.5px;color:#fff;left:1722.50px;top:16.25px;">C</span>
<span class="t" style="font-size:17px;color:#444;letter-spacing:-1.135px;left:30.50px;top:54.00px;">File</span>
<span class="t" style="font-size:17px;color:#333;font-weight:bold;letter-spacing:-0.411px;left:91.50px;top:54.00px;">Home</span>
<span class="t" style="font-size:17px;color:#444;letter-spacing:-0.303px;left:165.20px;top:54.00px;">Create</span>
<span class="t" style="font-size:17px;color:#444;letter-spacing:-0.149px;left:242.20px;top:54.00px;">External Data</span>
<span class="t" style="font-size:17px;color:#444;letter-spacing:-0.243px;left:372.30px;top:54.00px;">Database Tools</span>
<span class="t" style="font-size:17px;color:#444;letter-spacing:-0.256px;left:513.30px;top:54.00px;">Help</span>
<span class="t" style="font-size:17px;color:#505050;letter-spacing:0.279px;left:627.30px;top:54.00px;">Tell me what you want to do</span>
<span class="t" style="font-size:15.5px;color:#444;letter-spacing:-0.438px;left:29.00px;top:132.75px;">View</span>
<span class="t" style="font-size:15.5px;color:#444;letter-spacing:-1.414px;left:100.00px;top:132.75px;">Paste</span>
<span class="t" style="font-size:15px;color:#b1b1b1;letter-spacing:-0.672px;left:171.00px;top:91.00px;">Cut</span>
<span class="t" style="font-size:15px;color:#333;letter-spacing:-0.339px;left:171.00px;top:120.00px;">Copy</span>
<span class="t" style="font-size:15px;color:#b1b1b1;letter-spacing:-0.248px;left:171.00px;top:149.00px;">Format Painter</span>
<span class="t" style="font-size:13.5px;color:#444;letter-spacing:-0.691px;left:28.00px;top:183.75px;">Views</span>
<span class="t" style="font-size:13.5px;color:#444;letter-spacing:-0.041px;left:144.50px;top:183.75px;">Clipboard</span>
<span class="t" style="font-size:15.5px;color:#444;letter-spacing:-0.287px;left:305.00px;top:132.75px;">Filter</span>
<span class="t" style="font-size:12.3px;color:#2b7cd3;font-weight:bold;left:351.60px;top:88.85px;">A</span>
<span class="t" style="font-size:12.5px;color:#3a3a3a;left:352.00px;top:99.75px;">Z</span>
<span class="t" style="font-size:12.5px;color:#3a3a3a;left:352.00px;top:118.75px;">Z</span>
<span class="t" style="font-size:12.3px;color:#2b7cd3;font-weight:bold;left:351.60px;top:130.85px;">A</span>
<span class="t" style="font-size:12.3px;color:#b9b9b9;left:351.60px;top:148.85px;">A</span>
<span class="t" style="font-size:12.3px;color:#b9b9b9;left:352.00px;top:160.85px;">Z</span>
<span class="t" style="font-size:15px;color:#444;left:377.00px;top:91.00px;">Ascending</span>
<span class="t" style="font-size:15px;color:#444;left:377.00px;top:120.00px;">Descending</span>
<span class="t" style="font-size:15px;color:#b1b1b1;left:377.00px;top:149.00px;">Remove Sort</span>
<span class="t" style="font-size:15px;color:#444;left:498.00px;top:91.00px;">Selection</span>
<span class="t" style="font-size:15px;color:#b1b1b1;left:690.00px;top:91.00px;">New</span>
<span class="t" style="font-size:15px;color:#444;left:790.00px;top:91.00px;">Totals</span>
<span class="t" style="font-size:11px;color:#b1b1b1;left:936.00px;top:91.50px;">b</span>
<span class="t" style="font-size:15px;color:#b1b1b1;left:957.00px;top:91.00px;">Replace</span>
<span class="t" style="font-size:12px;color:#b1b1b1;font-weight:bold;left:1464.00px;top:105.00px;">¶</span>
<span class="t" style="font-size:25.5px;color:#a4373a;letter-spacing:-0.122px;left:19.50px;top:210.25px;">Customer ...</span>
<span class="t" style="font-size:13px;color:#444;font-style:italic;letter-spacing:-0.879px;left:18.50px;top:247.00px;">Search...</span>
<span class="t" style="font-size:15px;color:#444;font-weight:bold;letter-spacing:-0.676px;left:24.50px;top:273.00px;">Cases</span>
<span class="t" style="font-size:15px;color:#444;font-weight:bold;letter-spacing:-0.145px;left:24.50px;top:596.00px;">Customers</span>
<span class="t" style="font-size:15px;color:#444;font-weight:bold;letter-spacing:0.162px;left:24.50px;top:619.00px;">Employees</span>
<span class="t" style="font-size:15px;color:#444;font-weight:bold;letter-spacing:0.230px;left:24.50px;top:762.00px;">Knowledge Base</span>
<span class="t" style="font-size:15px;color:#444;font-weight:bold;letter-spacing:0.373px;left:24.50px;top:785.00px;">Supporting Objects</span>
<span class="t" style="font-size:15px;color:#444;font-weight:bold;letter-spacing:0.241px;left:24.50px;top:808.00px;">Supporting Charts</span>
<span class="t" style="font-size:12.5px;color:#444;letter-spacing:-0.080px;left:61.30px;top:301.75px;">Case Details</span>
<span class="t" style="font-size:12.5px;color:#444;letter-spacing:-0.139px;left:61.30px;top:331.75px;">Case List</span>
<span class="t" style="font-size:12.5px;color:#444;letter-spacing:0.292px;left:61.30px;top:361.75px;">Report Center</span>
<span class="t" style="font-size:12.5px;color:#444;letter-spacing:-0.080px;left:61.30px;top:391.75px;">Case Details</span>
<span class="t" style="font-size:12.5px;color:#444;letter-spacing:0.016px;left:61.30px;top:421.75px;">Closed Cases</span>
<span class="t" style="font-size:12.5px;color:#444;letter-spacing:0.057px;left:61.30px;top:451.75px;">Open Cases</span>
<span class="t" style="font-size:12.5px;color:#444;letter-spacing:0.094px;left:61.30px;top:481.75px;">Open Cases by Assigne...</span>
<span class="t" style="font-size:12.5px;color:#444;letter-spacing:0.222px;left:61.30px;top:511.75px;">Open Cases by Category</span>
<span class="t" style="font-size:12.5px;color:#444;letter-spacing:0.102px;left:61.30px;top:541.75px;">Open Cases by Status</span>
<span class="t" style="font-size:12.5px;color:#444;letter-spacing:0.096px;left:61.30px;top:571.75px;">Overdue Cases</span>
<span class="t" style="font-size:12.5px;color:#444;letter-spacing:0.148px;left:61.30px;top:647.75px;">Employee Details</span>
<span class="t" style="font-size:12.5px;color:#444;letter-spacing:0.124px;left:61.30px;top:677.75px;">Employee List</span>
<span class="t" style="font-size:12.5px;color:#444;letter-spacing:0.340px;left:61.30px;top:707.75px;">Employee Address Book</span>
<span class="t" style="font-size:12.5px;color:#444;letter-spacing:0.103px;left:61.30px;top:737.75px;">Employee Phone List</span>
<span class="t" style="font-size:12.5px;color:#444;letter-spacing:-0.201px;left:262.70px;top:210.75px;">Case List</span>
<span class="t" style="font-size:29.5px;color:#4a4f5e;left:327.00px;top:242.75px;">Employee List</span>
<span class="t" style="font-size:15px;color:#4a4f5e;letter-spacing:-0.216px;left:267.50px;top:295.00px;"><u>N</u>ew Employee</span>
<span class="t" style="font-size:15px;color:#4a4f5e;letter-spacing:-0.339px;left:1836.30px;top:295.00px;"><u>H</u>ome</span>
<span class="t" style="font-size:16px;color:#333;left:263.50px;top:325.50px;">ID</span>
<span class="t" style="font-size:16px;color:#333;left:325.40px;top:325.50px;">First Name</span>
<span class="t" style="font-size:16.5px;color:#0563c1;left:267.48px;top:348.75px;text-decoration:underline;text-underline-offset:1px;">(New)</span>
<span class="t" style="font-size:16.3px;color:#222;font-weight:bold;left:274.08px;top:373.85px;">Total</span>
<span class="t" style="font-size:13px;color:#555;letter-spacing:-0.172px;left:230.50px;top:988.00px;">Record:</span>
<span class="t" style="font-size:13.5px;color:#111;letter-spacing:-0.199px;left:320.50px;top:987.75px;">1 of 1</span>
<span class="t" style="font-size:13px;color:#b3b3b3;letter-spacing:-0.053px;left:487.50px;top:988.00px;">No Filter</span>
<span class="t" style="font-size:13.5px;color:#111;letter-spacing:-0.799px;left:557.70px;top:987.75px;">Search</span>
<span class="t" style="font-size:12.5px;color:#444;letter-spacing:0.186px;left:19.00px;top:1011.75px;">Form View</span>
<span class="t" style="font-size:13px;color:#444;letter-spacing:-0.019px;left:1646.00px;top:1011.00px;">Num Lock</span>
<span class="t" style="font-size:13.5px;color:#fff;letter-spacing:0.117px;left:1796.00px;top:1035.75px;">9:34 PM</span>
</div>
<div class="a" id="dlg" style="left:383px;top:96px;width:1048px;height:857px;background:#ececec;border:1px solid #a3a3a3;box-shadow:0 2px 12px rgba(0,0,0,.27),0 0 2px rgba(0,0,0,.15)"></div>
<div class="a" style="left:384px;top:97px;width:1046px;height:39px;background:#fff"></div>
<div class="a" style="left:384px;top:136px;width:1046px;height:44px;background:linear-gradient(90deg,#999 0,#a6a6a6 5%,#b8b8b8 12%,#c4c4c4 19%,#c4c4c4 69%,#b2b2b2 81%,#9d9d9d 90%,#8d8d8d 100%)"></div>
<div class="a" style="left:384px;top:180px;width:1046px;height:26px;background:linear-gradient(#f3f3f3 0,#ededed 8%,#e1e1e1 16%,#dddddd 45%,#e6e6e6 60%,#ececee 70%,#e6ebf3 85%,#dfe7f3 100%)"></div>
<div class="a" style="left:384px;top:205px;width:1046px;height:1px;background:linear-gradient(90deg,rgba(255,255,255,0) 0,rgba(255,255,255,0) 8%,rgba(255,255,255,.95) 22%,rgba(255,255,255,.95) 78%,rgba(255,255,255,0) 90%)"></div>
<div class="a" style="left:384px;top:206px;width:1046px;height:2px;background:linear-gradient(90deg,#1d3a86 0,#2a4a98 8%,#6b7fae 20%,#8090b4 32%,#8090b4 72%,#5a70a8 82%,#223f8c 88%,#16317c 100%)"></div>
<div class="a" style="left:384px;top:208px;width:1046px;height:18px;background:#878787"></div>
<div class="a" style="left:464px;top:193px;width:121px;height:30px;background:#fff;border:1px solid #a9a9a9;box-shadow:0 0 0 1px rgba(255,255,255,.25)"></div>
<div class="a" style="left:564px;top:195px;width:20px;height:27px;background:#e2e2e2;border:1px solid #adadad"></div>
<div class="a" style="left:408px;top:276px;width:998px;height:615px;background:#fff;border:1px solid #dadada"></div>
<div class="a" style="left:482px;top:248px;width:127px;height:29px;background:#eeeeee;border:1px solid #d6d6d6"></div>
<div class="a" style="left:608px;top:248px;width:120px;height:29px;background:#eeeeee;border:1px solid #d6d6d6"></div>
<div class="a" style="left:408px;top:246px;width:75px;height:32px;background:#fff;border:1px solid #dadada;border-bottom:none"></div>
<div class="fld" style="left:588px;top:304px;width:271px;height:27px"></div>
<div class="fld" style="left:588px;top:335px;width:271px;height:27px"></div>
<div class="fld" style="left:588px;top:366px;width:271px;height:27px"></div>
<div class="fld" style="left:588px;top:397px;width:271px;height:27px"></div>
<div class="fld" style="left:588px;top:495px;width:271px;height:27px"></div>
<div class="fld" style="left:588px;top:526px;width:271px;height:27px"></div>
<div class="fld" style="left:588px;top:557px;width:271px;height:27px"></div>
<div class="fld" style="left:588px;top:588px;width:271px;height:27px"></div>
<div class="fld" style="left:588px;top:686px;width:271px;height:51px"></div>
<div class="fld" style="left:588px;top:739px;width:271px;height:27px"></div>
<div class="fld" style="left:588px;top:768px;width:271px;height:27px"></div>
<div class="fld" style="left:588px;top:797px;width:271px;height:27px"></div>
<div class="fld" style="left:588px;top:826px;width:271px;height:27px"></div>
<div class="fld" style="left:1083px;top:306px;width:291px;height:27px"></div>
<div class="fld" style="left:1083px;top:337px;width:291px;height:29px"></div>
<div class="fld" style="left:873px;top:504px;width:506px;height:376px"></div>
<div class="a" style="left:1358px;top:505px;width:19px;height:374px;background:#f0f0f0"></div>
<div class="a" style="left:1358px;top:525px;width:19px;height:332px;background:#cdcdcd"></div>
<div class="a" style="left:384px;top:931px;width:1046px;height:21px;border-top:1px solid #a9a9a9;background:linear-gradient(#f5f6f9 0,#f3f4f7 48%,#e4e6ea 52%,#e3e5e9 100%)"></div>
<svg class="L" viewBox="0 0 1929 1039">
<g transform="translate(395.5 106.5) scale(1.05)"><rect x="0" y="0" width="19" height="17" fill="url(#gForm)"/><rect x="0" y="0" width="9" height="3" fill="#dc8fa6"/><rect x="9" y="0" width="10" height="3" fill="#b3326c"/><path d="M0 2.8 H19" stroke="#a82c62" stroke-width=".5"/><rect x="2" y=".9" width="3.2" height=".9" fill="#fff"/><rect x="0" y="3" width="1.5" height="14" fill="#a9c3e6"/><rect x="18.1" y="3" width=".9" height="14" fill="#1e2f7c"/><rect x="1.5" y="16.1" width="17.5" height=".9" fill="#1e2f7c"/><path d="M3.1 5.6 H7.9 M3.1 10.5 H7.9" stroke="#4a6a9a" stroke-width=".9"/><rect x="9" y="4.9" width="6" height="3.1" fill="#2f4d80"/><rect x="9" y="9.9" width="6" height="3.1" fill="#2f4d80"/><path d="M10.2 6.45 H13.8 M10.2 11.45 H13.8" stroke="#fff" stroke-width=".9"/></g>
<g stroke="#333" fill="none" stroke-width="1"><path d="M1277 115.5 H1289"/><rect x="1335.5" y="110.5" width="11" height="11"/><path d="M1394.5 110.5 L1405.5 121.5 M1405.5 110.5 L1394.5 121.5"/></g>
<g transform="translate(407.5 143.3)"><ellipse cx="27" cy="20" rx="28" ry="13.5" transform="rotate(-22 27 20)" fill="url(#gPlate)" stroke="rgba(255,255,255,.35)" stroke-width=".8"/><g transform="translate(2.2 -2.2) scale(.9)"><path d="M24.5 21 C24.5 13.5 40.5 13.5 40.5 21 C40.5 24.3 36 25.8 32.5 25.8 C28 25.8 24.5 24.3 24.5 21Z" fill="url(#gGreen)" stroke="#3d7e3a" stroke-width=".7"/><path d="M30 15.3 L32.3 20.5 L34.6 15.3Z" fill="#fff"/><circle cx="32.3" cy="9.5" r="5.7" fill="url(#gHead)" stroke="#777" stroke-width=".8"/><path d="M26.7 8.3 C27.5 2.3 37 2.3 37.9 8.3 C35 6.4 29.5 6.4 26.7 8.3Z" fill="#6a6a6a"/><path d="M10.8 27.5 C10.8 19.3 28 19.3 28 27.5 C28 31.2 23.5 32.8 19.4 32.8 C15 32.8 10.8 31.2 10.8 27.5Z" fill="url(#gBlue)" stroke="#2a57a8" stroke-width=".7"/><path d="M17 21.3 L19.3 27 L21.6 21.3Z" fill="#fff"/><circle cx="19.3" cy="15" r="5.9" fill="url(#gHead)" stroke="#777" stroke-width=".8"/><path d="M13.5 13.8 C14.3 7.4 24.3 7.4 25.1 13.8 C22.3 11.8 16.3 11.8 13.5 13.8Z" fill="#6a6a6a"/></g></g>
<path d="M569 204.5 L573.7 209.2 L578.4 204.5" stroke="#444" fill="none" stroke-width="1.3"/>
<g><rect x="603" y="202" width="8" height="8" fill="#3d5fb3" stroke="#22306f" stroke-width=".8"/><rect x="604.7" y="202.5" width="4.6" height="3" fill="#e9eefb"/><rect x="605" y="207" width="11" height="6" fill="#fff" stroke="#334" stroke-width=".9"/><rect x="606.5" y="208.5" width="8" height="2" fill="#4a7fd6"/><path d="M613.5 201 V209 M609.5 205 H617.5 M610.7 202.2 L616.3 207.8 M616.3 202.2 L610.7 207.8" stroke="#f0b44a" stroke-width="1.1"/></g>
<g><rect x="749" y="203" width="13" height="9" fill="#fdfdfd" stroke="#5a6a9a" stroke-width=".9"/><path d="M751 206.5 H756 M751 209 H756" stroke="#8aa0d0" stroke-width=".9"/><rect x="758.3" y="204.3" width="2.6" height="2.6" fill="#d8342e"/></g>
<g><rect x="843" y="205" width="12" height="9" fill="#fdfdfd" stroke="#55608a" stroke-width=".9"/><circle cx="846.5" cy="208.3" r="1.6" fill="#c8372f"/><path d="M844.5 213 C844.5 210.3 848.5 210.3 848.5 213Z" fill="#c8372f"/><path d="M850 208 H853.5 M850 210.5 H853.5" stroke="#8a93b5" stroke-width=".8"/><rect x="851" y="198.5" width="7.5" height="7.5" fill="#3d5fb3" stroke="#22306f" stroke-width=".8"/><rect x="852.7" y="199" width="4" height="2.6" fill="#e9eefb"/><rect x="852.7" y="203.3" width="4" height="2.6" fill="#1c2a66"/></g>
<g><path d="M1352 201 H1358.5 L1356.5 203 V214.5 L1352 212.5 Z" fill="#e7a64a" stroke="#9a6a28" stroke-width=".7"/><path d="M1353 201.5 H1357 V211" stroke="#f8dca8" stroke-width=".8" fill="none"/><path d="M1367 205.5 H1361.5 V203 L1357.5 207 L1361.5 211 V208.5 H1367Z" fill="#2f7ed8" stroke="#1b56a4" stroke-width=".6"/></g>
<g><circle cx="928.7" cy="376" r="50" fill="#fff" stroke="#1eabfb" stroke-width="8"/><path d="M913 395 C915 386 920 382.5 927 382.5 C936 382.5 942 384 946 389 C950 388 953 390 954 395 Z" fill="#d6e4f4"/><ellipse cx="925.8" cy="367" rx="17" ry="14.5" fill="#fbe5d2"/><path d="M902.6 360.5 C901.5 348 906 337 916 333.5 C926 330.5 937 333 941 341 C944 347 944 353 943.3 358 C941 352 939 348.5 937 347.5 C931 352 921 353 914 356.5 C910 358.5 906 360 902.6 360.5Z" fill="#5c2d10"/><circle cx="917.5" cy="365.5" r="6.3" fill="#fdfdf6" stroke="#e8e4d8" stroke-width="1"/><circle cx="934" cy="364" r="6.3" fill="#fdfdf6" stroke="#e8e4d8" stroke-width="1"/><path d="M915.3 366.3 Q917.3 363.3 919.3 366.3 M931.8 364.8 Q933.8 361.8 935.8 364.8" stroke="#5c2d10" stroke-width="1.1" fill="none"/><path d="M925.5 376 Q927.5 377.6 929.5 376" stroke="#d9827a" stroke-width="1" fill="none"/><path d="M926.5 382.8 L930.6 382.8 L931 394.5 L928.5 396 L926.2 394.5Z" fill="#3a5cae"/><path d="M950 389 C948.5 385 950.5 381 953.8 378.5 L955.6 373.8 C956.6 372.3 958.3 373.2 958 375 L957.3 380 C961.5 381.5 962.5 388 959 391.5 C956 393.5 951.5 392.5 950 389Z" fill="#fbd9c4" stroke="#f0bfa4" stroke-width=".6"/><path d="M901 395.5 H956.5" stroke="#4da5ee" stroke-width="1.5"/><path d="M914 408.5 H951.5" stroke="#8d97b8" stroke-width="1"/><path d="M914 411 H951" stroke="#d9b5b5" stroke-width="1.2"/></g>
<g stroke="#404040" fill="none" stroke-width="2"><path d="M1363 518.3 L1367.5 513.3 L1372 518.3"/><path d="M1363 864.8 L1367.5 869.8 L1372 864.8"/></g>
<g><path d="M444 937.5 V946.5" stroke="#222" stroke-width="1.3"/><path d="M451 937.5 V946.5 L445.7 942Z" fill="#222"/><path d="M470.3 937.5 V946.5 L465 942Z" fill="#bdbdbd"/><rect x="478.5" y="932.5" width="62" height="18" fill="#fff" stroke="#c9cbd1"/><path d="M552 937.5 V946.5 L557.5 942Z" fill="#222"/><path d="M572 937.5 V946.5 L577.5 942Z" fill="#222"/><path d="M579.7 937.5 V946.5" stroke="#222" stroke-width="1.3"/><path d="M589 937.5 V946.5 L594.5 942Z" fill="#222"/><path d="M600.5 938 V946 M596.5 942 H604.5 M597.7 939.2 L603.3 944.8 M603.3 939.2 L597.7 944.8" stroke="#f0a030" stroke-width="1.2"/><path d="M612.5 932 V952 M709 932 V952" stroke="#c4c6cc"/><path d="M623.7 934 H643.5 V935.5 L636.3 943 V951 H631 V943 L623.7 935.5Z" fill="none" stroke="#b9b9b9" stroke-width="1.3"/><path d="M637.8 946 L643.3 951.5 M643.3 946 L637.8 951.5" stroke="#b9b9b9" stroke-width="1.1"/><rect x="715.5" y="932.5" width="88" height="18" fill="#fff" stroke="#c9cbd1"/></g>
</svg>
<div id="dlgtext">
<span class="t" style="font-size:15px;color:#8c8c96;letter-spacing:-0.115px;left:420.70px;top:109.00px;">Employee Details</span>
<span class="t" style="font-size:29.5px;color:#4a4f5e;letter-spacing:-0.132px;left:488.40px;top:148.75px;">Thana Meedee</span>
<span class="t" style="font-size:15px;color:#5a5f6e;letter-spacing:-0.251px;left:412.30px;top:200.00px;"><u>G</u>o to</span>
<span class="t" style="font-size:15px;color:#5a5f6e;letter-spacing:-0.388px;left:620.30px;top:200.00px;"><u>S</u>ave and New</span>
<span class="t" style="font-size:15px;color:#5a5f6e;letter-spacing:-0.040px;left:765.40px;top:200.00px;"><u>E</u>-mail</span>
<span class="t" style="font-size:15px;color:#5a5f6e;letter-spacing:-0.181px;left:860.00px;top:200.00px;">Save As <u>O</u>utlook Contact</span>
<span class="t" style="font-size:15px;color:#5a5f6e;letter-spacing:-0.836px;left:1369.00px;top:200.00px;"><u>C</u>lose</span>
<span class="t" style="font-size:16.5px;color:#1a1a1a;letter-spacing:-0.115px;left:416.00px;top:252.75px;">General</span>
<span class="t" style="font-size:16.5px;color:#1a1a1a;letter-spacing:-0.293px;left:487.00px;top:254.75px;">Assigned Cases</span>
<span class="t" style="font-size:16.5px;color:#1a1a1a;letter-spacing:-0.139px;left:615.00px;top:254.75px;">Opened Cases</span>
<span class="t" style="font-size:16.5px;color:#575c68;letter-spacing:0.092px;left:427.20px;top:307.75px;">First Name</span>
<span class="t" style="font-size:16.5px;color:#575c68;letter-spacing:0.054px;left:427.20px;top:338.75px;">Last Name</span>
<span class="t" style="font-size:16.5px;color:#575c68;letter-spacing:0.332px;left:427.20px;top:369.75px;">Company</span>
<span class="t" style="font-size:16.5px;color:#575c68;letter-spacing:0.095px;left:427.20px;top:400.75px;">Job Title</span>
<span class="t" style="font-size:16.5px;color:#444;font-weight:bold;letter-spacing:0.008px;left:427.20px;top:458.75px;">Phone Numbers</span>
<span class="t" style="font-size:16.5px;color:#575c68;letter-spacing:-0.131px;left:427.20px;top:498.75px;">Business Phone</span>
<span class="t" style="font-size:16.5px;color:#575c68;letter-spacing:0.358px;left:427.20px;top:529.75px;">Home Phone</span>
<span class="t" style="font-size:16.5px;color:#575c68;letter-spacing:0.411px;left:427.20px;top:560.75px;">Mobile Phone</span>
<span class="t" style="font-size:16.5px;color:#575c68;letter-spacing:0.170px;left:427.20px;top:591.75px;">Fax Number</span>
<span class="t" style="font-size:16.5px;color:#444;font-weight:bold;letter-spacing:-0.369px;left:427.20px;top:649.75px;">Address</span>
<span class="t" style="font-size:16.5px;color:#575c68;letter-spacing:0.040px;left:427.20px;top:689.75px;">Street</span>
<span class="t" style="font-size:16.5px;color:#575c68;letter-spacing:0.026px;left:427.20px;top:742.75px;">City</span>
<span class="t" style="font-size:16.5px;color:#575c68;letter-spacing:0.233px;left:427.20px;top:771.75px;">State/Province</span>
<span class="t" style="font-size:16.5px;color:#575c68;letter-spacing:0.260px;left:427.20px;top:800.75px;">Zip/Postal Code</span>
<span class="t" style="font-size:16.5px;color:#575c68;letter-spacing:0.413px;left:427.20px;top:829.75px;">Country/Region</span>
<span class="t" style="font-size:16.5px;color:#575c68;letter-spacing:0.147px;left:994.20px;top:309.75px;">E-mail</span>
<span class="t" style="font-size:16.5px;color:#575c68;letter-spacing:0.126px;left:994.20px;top:340.75px;">Web Page</span>
<span class="t" style="font-size:16.5px;color:#575c68;letter-spacing:0.277px;left:874.70px;top:464.75px;">Notes</span>
<span class="t" style="font-size:15px;color:#111;font-family:'DejaVu Sans',sans-serif;letter-spacing:-0.758px;left:590.50px;top:309.50px;">Thana</span>
<span class="t" style="font-size:15px;color:#111;font-family:'DejaVu Sans',sans-serif;letter-spacing:-0.158px;left:590.50px;top:340.50px;">Meedee</span>
<span class="t" style="font-size:15px;color:#111;font-family:'DejaVu Sans',sans-serif;letter-spacing:-0.588px;left:590.50px;top:371.50px;">9EXPERT</span>
<span class="t" style="font-size:15px;color:#111;font-family:'DejaVu Sans',sans-serif;letter-spacing:-0.445px;left:590.50px;top:402.50px;">Developer</span>
<span class="t" style="font-size:15px;color:#111;font-family:'DejaVu Sans',sans-serif;letter-spacing:-0.803px;left:590.50px;top:500.50px;">022194304</span>
<span class="t" style="font-size:15px;color:#111;font-family:'DejaVu Sans',sans-serif;letter-spacing:-0.199px;left:590.50px;top:744.50px;">Ratchatawi</span>
<span class="t" style="font-size:15px;color:#111;font-family:'DejaVu Sans',sans-serif;letter-spacing:-0.553px;left:590.50px;top:773.50px;">Bangkok</span>
<span class="t" style="font-size:15px;color:#111;font-family:'DejaVu Sans',sans-serif;letter-spacing:-0.456px;left:590.50px;top:831.50px;">Thailand</span>
<span class="t" style="font-size:15px;color:#111;font-family:'DejaVu Sans',sans-serif;letter-spacing:-0.207px;left:1085.20px;top:311.50px;">training@9expert.co.th</span>
<span class="t" style="font-size:15px;color:#0563c1;font-family:'DejaVu Sans',sans-serif;letter-spacing:0.001px;left:1085.20px;top:342.50px;text-decoration:underline;text-underline-offset:2px;">https://www.9experttraining.com</span>
<span class="t" style="font-size:15px;color:#111;font-family:'DejaVu Sans',sans-serif;letter-spacing:-0.194px;left:875.00px;top:509.50px;">Job Description : Developer</span>
<span class="t" style="font-size:15px;color:#111;font-family:'DejaVu Sans',sans-serif;left:875.00px;top:529.50px;">-</span>
<span class="t" style="font-size:16.5px;color:#b53a30;left:904.50px;top:397.75px;">9</span>
<span class="t" style="font-size:13px;color:#3b5ea8;letter-spacing:-0.016px;left:913.50px;top:397.00px;">Expert</span>
<span class="t" style="font-size:13px;color:#555;letter-spacing:-0.172px;left:390.50px;top:937.00px;">Record:</span>
<span class="t" style="font-size:13.5px;color:#111;letter-spacing:-0.199px;left:480.50px;top:936.75px;">1 of 1</span>
<span class="t" style="font-size:13px;color:#b3b3b3;letter-spacing:-0.053px;left:647.70px;top:937.00px;">No Filter</span>
<span class="t" style="font-size:13.5px;color:#111;letter-spacing:-0.799px;left:717.70px;top:936.75px;">Search</span>
</div>
</body></html>
